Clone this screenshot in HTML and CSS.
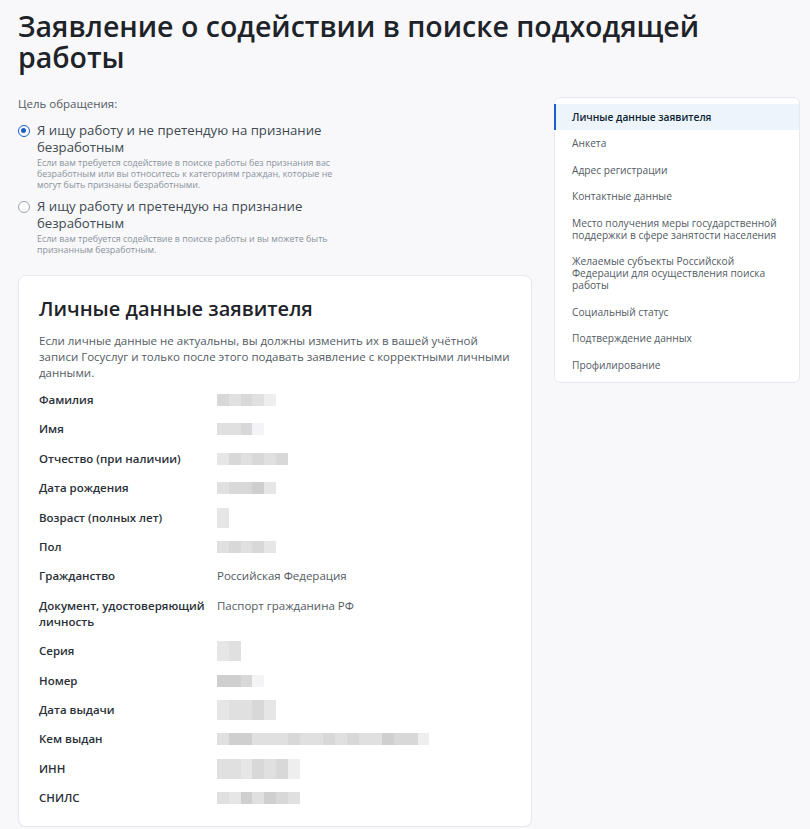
FILE: index.html
```html
<!DOCTYPE html>
<html lang="ru">
<head>
<meta charset="utf-8">
<title>Заявление о содействии в поиске подходящей работы</title>
<link rel="stylesheet" href="styles.css">
</head>
<body>
<div class="page">
  <h1 class="title">Заявление о содействии в поиске подходящей работы</h1>
  <div class="layout">
    <main class="main">
      <div class="purpose-label">Цель обращения:</div>
      <div class="option">
        <span class="radio radio-checked"></span>
        <div class="option-body">
          <div class="option-title">Я ищу работу и не претендую на признание безработным</div>
          <div class="option-hint">Если вам требуется содействие в поиске работы без признания вас безработным или вы относитесь к категориям граждан, которые не могут быть признаны безработными.</div>
        </div>
      </div>
      <div class="option">
        <span class="radio"></span>
        <div class="option-body">
          <div class="option-title">Я ищу работу и претендую на признание безработным</div>
          <div class="option-hint">Если вам требуется содействие в поиске работы и вы можете быть признанным безработным.</div>
        </div>
      </div>

      <section class="card">
        <h2 class="card-title">Личные данные заявителя</h2>
        <p class="card-text">Если личные данные не актуальны, вы должны изменить их в вашей учётной записи Госуслуг и только после этого подавать заявление с корректными личными данными.</p>
        <div class="fields">
          <div class="label">Фамилия</div>
          <div class="value"><span class="blur"><i class="g2"></i><i class="g3"></i><i class="g2"></i><i class="g3"></i><i class="g5"></i></span></div>
          <div class="label">Имя</div>
          <div class="value"><span class="blur"><i class="g3"></i><i class="g3"></i><i class="g2"></i><i class="g6"></i></span></div>
          <div class="label">Отчество (при наличии)</div>
          <div class="value"><span class="blur"><i class="g4"></i><i class="g2"></i><i class="g3"></i><i class="g2"></i><i class="g3"></i><i class="g2"></i></span></div>
          <div class="label">Дата рождения</div>
          <div class="value"><span class="blur"><i class="g3"></i><i class="g2"></i><i class="g2"></i><i class="g1"></i><i class="g4"></i></span></div>
          <div class="label">Возраст (полных лет)</div>
          <div class="value"><span class="blur tall"><i class="g4"></i></span></div>
          <div class="label">Пол</div>
          <div class="value"><span class="blur"><i class="g3"></i><i class="g2"></i><i class="g3"></i><i class="g2"></i><i class="g4"></i></span></div>
          <div class="label">Гражданство</div>
          <div class="value">Российская Федерация</div>
          <div class="label">Документ, удостоверяющий личность</div>
          <div class="value">Паспорт гражданина РФ</div>
          <div class="label">Серия</div>
          <div class="value"><span class="blur tall"><i class="g4"></i><i class="g3"></i></span></div>
          <div class="label">Номер</div>
          <div class="value"><span class="blur"><i class="g1"></i><i class="g1"></i><i class="g2"></i><i class="g6"></i></span></div>
          <div class="label">Дата выдачи</div>
          <div class="value"><span class="blur tall"><i class="g4"></i><i class="g3"></i><i class="g3"></i><i class="g2"></i><i class="g4"></i></span></div>
          <div class="label">Кем выдан</div>
          <div class="value"><span class="blur"><i class="g3"></i><i class="g1"></i><i class="g1"></i><i class="g3"></i><i class="g3"></i><i class="g3"></i><i class="g2"></i><i class="g3"></i><i class="g3"></i><i class="g2"></i><i class="g3"></i><i class="g2"></i><i class="g3"></i><i class="g3"></i><i class="g1"></i><i class="g2"></i><i class="g2"></i><i class="g5"></i></span></div>
          <div class="label">ИНН</div>
          <div class="value"><span class="blur tall"><i class="g3"></i><i class="g3"></i><i class="g4"></i><i class="g2"></i><i class="g3"></i><i class="g2"></i><i class="g5"></i></span></div>
          <div class="label">СНИЛС</div>
          <div class="value"><span class="blur"><i class="g3"></i><i class="g4"></i><i class="g1"></i><i class="g3"></i><i class="g1"></i><i class="g2"></i><i class="g3"></i></span></div>
        </div>
      </section>
    </main>

    <nav class="sidebar">
      <a class="nav-item active">Личные данные заявителя</a>
      <a class="nav-item">Анкета</a>
      <a class="nav-item">Адрес регистрации</a>
      <a class="nav-item">Контактные данные</a>
      <a class="nav-item">Место получения меры государственной поддержки в сфере занятости населения</a>
      <a class="nav-item">Желаемые субъекты Российской Федерации для осуществления поиска работы</a>
      <a class="nav-item">Социальный статус</a>
      <a class="nav-item">Подтверждение данных</a>
      <a class="nav-item">Профилирование</a>
    </nav>
  </div>
</div>
</body>
</html>
```

FILE: styles.css
```css
* { box-sizing: border-box; }

html, body {
  margin: 0;
  padding: 0;
  background: #f8f8fa;
}

body {
  font-family: "Open Sans", "Noto Sans", sans-serif;
  color: #0b1f33;
}

.page {
  padding: 11px 10px 0 18px;
}

.title {
  margin: 0 0 23px;
  font-size: 28.5px;
  line-height: 31px;
  font-weight: 600;
  color: #1d2329;
  max-width: 720px;
}

.layout {
  display: flex;
  align-items: flex-start;
  gap: 22px;
}

.main {
  width: 514px;
  flex: none;
}

.purpose-label {
  font-size: 11.5px;
  line-height: 16px;
  color: #535b63;
  margin-bottom: 10px;
}

.option {
  display: flex;
  gap: 7px;
  margin-bottom: 8px;
}

.radio {
  flex: none;
  width: 12px;
  height: 12px;
  margin-top: 3px;
  border: 1px solid #9aa3ad;
  border-radius: 50%;
  background: #fff;
  position: relative;
}

.radio-checked {
  border: 1.5px solid #1a5ec9;
}

.radio-checked::after {
  content: "";
  position: absolute;
  left: 2px;
  top: 2px;
  width: 5px;
  height: 5px;
  border-radius: 50%;
  background: #1a5ec9;
}

.option-body {
  width: 300px;
}

.option-title {
  font-size: 13.2px;
  line-height: 16.5px;
  color: #404850;
}

.option-hint {
  font-size: 8.9px;
  line-height: 11px;
  color: #8a929b;
  margin-top: 2px;
}

.card {
  margin-top: 20px;
  background: #fff;
  border: 1px solid #e6e9ed;
  border-radius: 8px;
  padding: 21px 20px 20px;
  box-shadow: 0 1px 2px rgba(0, 0, 0, 0.03);
}

.card-title {
  margin: 0 0 12px;
  font-size: 20px;
  line-height: 24px;
  font-weight: 600;
  color: #1d2329;
}

.card-text {
  margin: 0 0 11px;
  font-size: 11.5px;
  line-height: 16px;
  color: #535b63;
}

.fields {
  display: grid;
  grid-template-columns: 178px 1fr;
  row-gap: 13.4px;
  font-size: 11.5px;
  line-height: 16px;
}

.label {
  font-weight: 600;
  color: #2a3037;
  padding-right: 8px;
}

.value {
  color: #535b63;
}

.blur {
  display: inline-flex;
  vertical-align: top;
  height: 12px;
  margin-top: 2px;
}

.blur.tall {
  height: 20px;
  margin-top: -2px;
  margin-bottom: -2px;
}

.blur i {
  display: block;
  width: 11.8px;
  height: 100%;
}

.g1 { background: #cfcfcf; }
.g2 { background: #d8d8d8; }
.g3 { background: #e0e0e0; }
.g4 { background: #e6e6e6; }
.g5 { background: #eeeeee; }
.g6 { background: #f4f4f6; }

.sidebar {
  width: 246px;
  flex: none;
  margin-top: 1px;
  background: #fff;
  border: 1px solid #e6e9ed;
  border-radius: 6px;
  padding: 5.5px 0 4px;
  display: flex;
  flex-direction: column;
}

.nav-item {
  display: block;
  padding: 7.25px 14px 7.25px 17px;
  font-size: 10.2px;
  line-height: 12px;
  color: #535b63;
  text-decoration: none;
}

.nav-item.active {
  margin-left: -1px;
  padding-left: 16px;
  border-left: 2px solid #1a5ec9;
  background: #edf4fb;
  color: #0b1f33;
  font-weight: 600;
}
```
